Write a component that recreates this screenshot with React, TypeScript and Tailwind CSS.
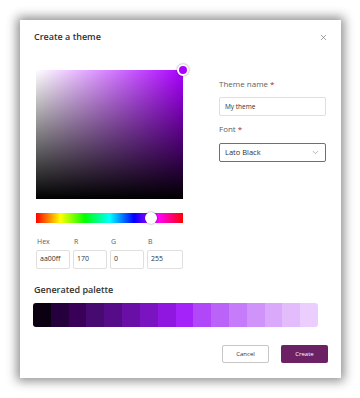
import { X, ChevronDown } from 'lucide-react'

const palette = [
  '#0b0012', '#26003d', '#3a0059', '#470a70', '#560b88', '#6a0fa6', '#7a14c0', '#8f17e0',
  '#a323f8', '#b048f9', '#bb62f9', '#c67bfa', '#cf93fa', '#daa9fb', '#e3bcfb', '#ebcefd',
]

function Field({ label, value, w }: { label: string; value: string; w: string }) {
  return (
    <div className="flex flex-col">
      <span className="text-[7px] leading-[10px] text-[#605e5c] pl-[1px]">{label}</span>
      <div className={`${w} h-[19px] mt-[3px] border border-[#e1dfdd] rounded-[2px] flex items-center px-[3px] text-[7px] text-[#323130]`}>
        {value}
      </div>
    </div>
  )
}

export default function App() {
  return (
    <div className="w-[360px] h-[398px] bg-white p-5 font-['Open_Sans',sans-serif]">
      <div className="w-[321px] h-[358px] bg-white shadow-[0_0_10px_3px_rgba(0,0,0,0.45)] flex flex-col">
        {/* Header */}
        <div className="flex items-center justify-between pl-[14px] pr-[13px] pt-[10px]">
          <h1 className="text-[9px] leading-[14px] text-[#323130] font-semibold">Create a theme</h1>
          <X size={9} strokeWidth={1.5} className="text-[#605e5c]" />
        </div>

        {/* Body */}
        <div className="flex">
          {/* Color picker */}
          <div className="pl-[16px] pt-[26px] w-[199px]">
            <div className="relative w-[147px] h-[129px] bg-[linear-gradient(to_top,#000,transparent),linear-gradient(to_right,#fff,#aa00ff)]">
              <div className="absolute -top-[6px] -right-[6px] w-[12px] h-[12px] rounded-full bg-[#aa00ff] border-2 border-white shadow-[0_0_2px_rgba(0,0,0,0.5)]" />
            </div>
            <div className="relative w-[147px] h-[10px] mt-[14px] bg-[linear-gradient(to_right,#f00,#ff0,#0f0,#0ff,#00f,#f0f,#f00)]">
              <div className="absolute top-[-1px] left-[109px] w-[12px] h-[12px] rounded-full bg-white shadow-[0_0_2px_rgba(0,0,0,0.5)]" />
            </div>
            <div className="flex gap-[3px] mt-[14px]">
              <Field label="Hex" value="aa00ff" w="w-[34px]" />
              <Field label="R" value="170" w="w-[34px]" />
              <Field label="G" value="0" w="w-[34px]" />
              <Field label="B" value="255" w="w-[36px]" />
            </div>
          </div>

          {/* Theme settings */}
          <div className="pt-[34px] flex flex-col">
            <span className="text-[8px] leading-[12px] text-[#605e5c]">
              Theme name <span className="text-[#a4262c]">*</span>
            </span>
            <div className="w-[107px] h-[19px] mt-[7px] border border-[#e1dfdd] rounded-[2px] flex items-center px-[5px] text-[6.5px] text-[#323130]">
              My theme
            </div>
            <span className="text-[8px] leading-[12px] text-[#605e5c] mt-[7px]">
              Font <span className="text-[#a4262c]">*</span>
            </span>
            <div className="w-[107px] h-[19px] mt-[8px] border-[1.5px] border-[#8c5a8c] rounded-[2px] flex items-center justify-between pl-[5px] pr-[5px] text-[7.5px] text-[#323130]">
              Lato Black
              <ChevronDown size={9} strokeWidth={1.2} className="text-[#605e5c]" />
            </div>
          </div>
        </div>

        {/* Palette */}
        <div className="px-[13px] mt-[15px]">
          <div className="text-[9px] leading-[12px] font-semibold text-[#323130] pl-[1px]">Generated palette</div>
          <div className="flex w-[285px] h-[24px] mt-[7px] rounded-[3px] overflow-hidden">
            {palette.map((c) => (
              <div key={c} className="flex-1" style={{ backgroundColor: c }} />
            ))}
          </div>
        </div>

        {/* Footer */}
        <div className="flex justify-end gap-[12px] pr-[13px] mt-[18px]">
          <button className="w-[47px] h-[18px] border border-[#c8c6c4] rounded-[2px] bg-white text-[6px] text-[#323130]">
            Cancel
          </button>
          <button className="w-[47px] h-[18px] rounded-[2px] bg-[#6b2164] text-[6px] text-white">
            Create
          </button>
        </div>
      </div>
    </div>
  )
}
